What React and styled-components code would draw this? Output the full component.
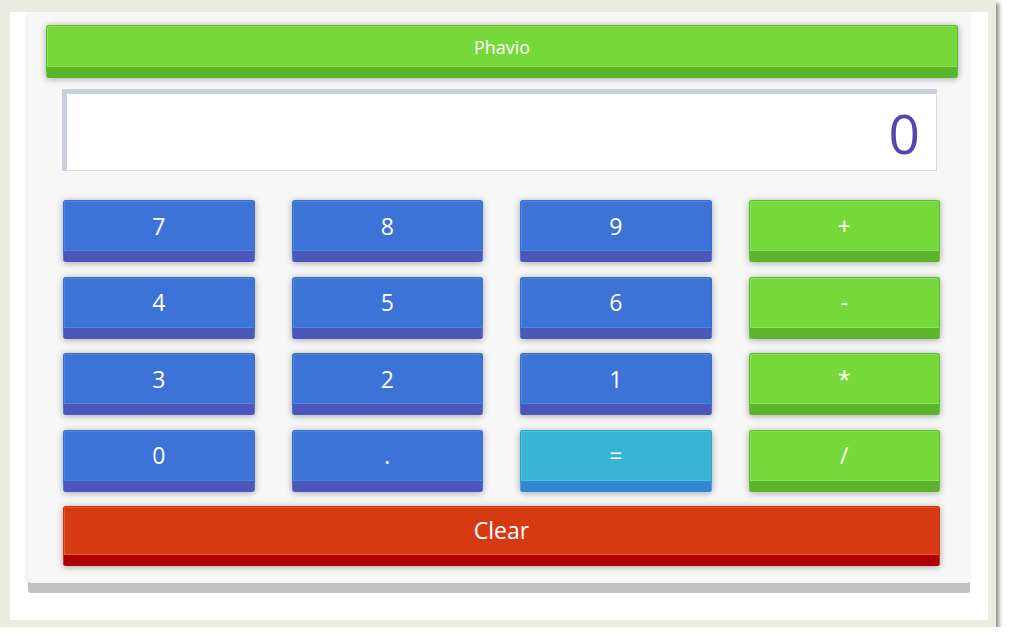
import React, { useState } from "react";
import styled, { createGlobalStyle, css } from "styled-components";

const GlobalStyle = createGlobalStyle`
  *, *::before, *::after { box-sizing: border-box; }
  body {
    margin: 0;
    background: #ffffff;
    font-family: "Open Sans", "Noto Sans", sans-serif;
  }
`;

const palette = {
  blue: { face: "#3d72d7", edge: "#3a6fd0", line: "#4a88d8", base: "#4b57bb" },
  green: { face: "#77d83c", edge: "#55c22b", line: "#8ce05a", base: "#5cb42a" },
  cyan: { face: "#39b3d7", edge: "#22a6c9", line: "#4cc0dd", base: "#3288d2" },
  red: { face: "#d63a13", edge: "#c9330f", line: "#e05a30", base: "#ad0000" },
};

const Frame = styled.div`
  width: 996px;
  height: 627px;
  background: #ffffff;
  border-style: solid;
  border-color: #ecebe2;
  border-width: 12px 8px 7px 10px;
  box-shadow: 3px 3px 4px rgba(0, 0, 0, 0.45);
  padding: 2px 0 0 18px;
`;

const Card = styled.div`
  width: 942px;
  background: #f7f7f7;
  border-radius: 3px;
  padding: 11px 30px 17px 35px;
  box-shadow: 0 10px 0 #c0c0c0, -1px 0 4px rgba(0, 0, 0, 0.12);
  display: flex;
  flex-direction: column;
`;

const keyLook = css`
  ${({ $tone }) => {
    const c = palette[$tone];
    return css`
      background: ${c.face};
      border: 1px solid ${c.edge};
      border-bottom: 11px solid ${c.base};
      box-shadow: inset 0 -1px 0 ${c.line}, inset 1px 1px 0 ${c.line},
        0 1px 7px rgba(0, 0, 0, 0.33);
    `;
  }}
  border-radius: 3px;
  color: #ffffff;
  font-family: "Open Sans", "Noto Sans", sans-serif;
  display: flex;
  align-items: center;
  justify-content: center;
`;

const TitleBar = styled.div`
  ${keyLook}
  height: 53px;
  margin: 0 -18px 0 -17px;
  font-size: 18px;
`;

const Display = styled.div`
  margin: 11px 3px 0 -1px;
  height: 82px;
  background: #ffffff;
  border-style: solid;
  border-width: 5px 1px 1px 5px;
  border-color: #cbd0de #d4d8ec #d4d8ec #cbd0de;
  display: flex;
  align-items: center;
  justify-content: flex-end;
  padding-right: 16px;
  color: #5546b2;
  font-size: 55px;
  line-height: 1;
`;

const Keypad = styled.div`
  margin-top: 29px;
  display: grid;
  grid-template-columns: repeat(4, 1fr);
  column-gap: 37px;
  row-gap: 14.67px;
`;

const Key = styled.button`
  ${keyLook}
  height: 62px;
  font-size: 23px;
  padding: 0 0 1px;
  cursor: pointer;
`;

const ClearKey = styled(Key)`
  margin-top: 14px;
  height: 60px;
`;

const keys = [
  ["7", "blue"], ["8", "blue"], ["9", "blue"], ["+", "green"],
  ["4", "blue"], ["5", "blue"], ["6", "blue"], ["-", "green"],
  ["3", "blue"], ["2", "blue"], ["1", "blue"], ["*", "green"],
  ["0", "blue"], [".", "blue"], ["=", "cyan"], ["/", "green"],
];

const App = () => {
  const [ value, setValue ] = useState("0");

  const press = (k) => {
    if (k === "=") {
      try {
        // eslint-disable-next-line no-new-func
        const res = Function("return (" + value + ")")();
        setValue(String(res));
      } catch (e) {
        setValue("0");
      }
      return;
    }
    setValue(prev => (prev === "0" && k !== "." ? k : prev + k));
  };

  return (
    <>
      <GlobalStyle />
      <Frame>
        <Card>
          <TitleBar $tone="green">Phavio</TitleBar>
          <Display>{value}</Display>
          <Keypad>
            {keys.map(([k, tone]) => (
              <Key key={k} $tone={tone} onClick={() => press(k)}>{k}</Key>
            ))}
          </Keypad>
          <ClearKey $tone="red" onClick={() => setValue("0")}>Clear</ClearKey>
        </Card>
      </Frame>
    </>
  );
};

export default App;
